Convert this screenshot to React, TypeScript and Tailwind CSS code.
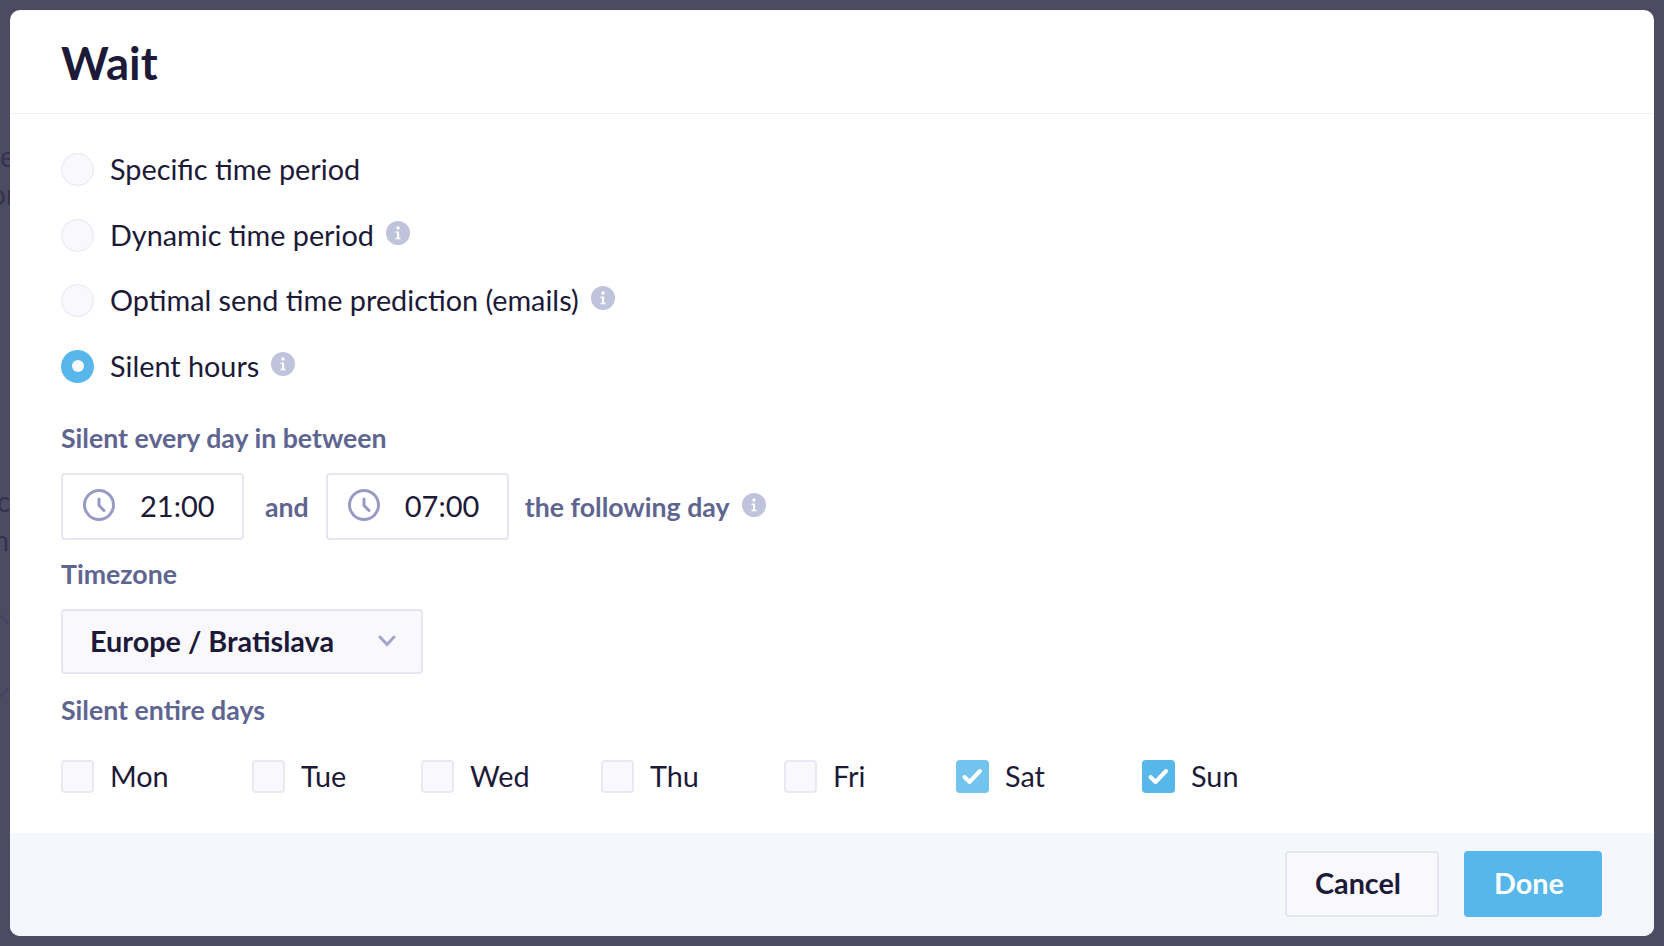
const TEXT = "text-[#1c1a38]";
const LABEL = "text-[26.7px] leading-[32px] font-bold text-[#5f6591]";

const DAYS = [
  { label: "Mon", width: "w-[191px]", box: "" },
  { label: "Tue", width: "w-[169px]", box: "" },
  { label: "Wed", width: "w-[180px]", box: "" },
  { label: "Thu", width: "w-[183px]", box: "" },
  { label: "Fri", width: "w-[172px]", box: "" },
  { label: "Sat", width: "w-[186px]", box: "bg-[#72c3ee]" },
  { label: "Sun", width: "", box: "bg-[#58b7ea]" },
];

function Info() {
  return (
    <svg width="24" height="24" viewBox="0 0 24 24" className="shrink-0">
      <circle cx="12" cy="12" r="12" fill="#c0c3dc" />
      <circle cx="12" cy="7" r="1.7" fill="#fff" />
      <path d="M9.5 10.5h3.6v6.2h1.4v1.6H9.5v-1.6h1.5v-4.6H9.5z" fill="#fff" />
    </svg>
  );
}

function Clock() {
  return (
    <svg width="32" height="32" viewBox="0 0 32 32" fill="none" className="shrink-0">
      <circle cx="16" cy="16" r="14.5" stroke="#979bc4" strokeWidth="3" />
      <path d="M16 10v6.5l5 5" stroke="#979bc4" strokeWidth="3" strokeLinecap="round" />
    </svg>
  );
}

function Radio({ label, on, info }: { label: string; on?: boolean; info?: boolean }) {
  return (
    <div className="flex items-center h-[33px]">
      {on ? (
        <span className="w-[33px] h-[33px] rounded-full bg-[#58b7ea] flex items-center justify-center shrink-0">
          <span className="w-[12px] h-[12px] rounded-full bg-[#f8f8fc]" />
        </span>
      ) : (
        <span className="w-[33px] h-[33px] rounded-full bg-[#f9f9fd] border border-[#e4e6f3] shrink-0" />
      )}
      <span className={`ml-[16px] text-[28.8px] leading-[33px] ${TEXT}`}>{label}</span>
      {info && (
        <span className="ml-[12px] -mt-[5px] flex">
          <Info />
        </span>
      )}
    </div>
  );
}

function TimeBox({ value }: { value: string }) {
  return (
    <div className="w-[183px] h-[67px] bg-white border-2 border-[#e4e6f3] rounded-[4px] flex items-center pl-[20px] shrink-0">
      <span className="flex -mt-[3px]">
        <Clock />
      </span>
      <span className={`ml-[25px] pb-[2px] text-[29px] ${TEXT}`}>{value}</span>
    </div>
  );
}

export default function App() {
  return (
    <div className="relative h-[946px] w-[1664px] overflow-hidden bg-[#4d4a63] p-[10px] font-['Lato',sans-serif]">
      {/* page showing behind the modal */}
      <span className="absolute left-[-10px] top-[135px] text-[28px] text-[#34324d]">te</span>
      <span className="absolute left-[-10px] top-[173px] text-[28px] text-[#34324d]">or</span>
      <span className="absolute left-[-10px] top-[480px] text-[28px] text-[#34324d]">ic</span>
      <span className="absolute left-[-14px] top-[519px] text-[28px] text-[#34324d]">m</span>
      <svg width="10" height="100" viewBox="0 0 10 100" fill="none" className="absolute left-0 top-[606px]">
        <path d="M0 9l10 10M0 91l10-10" stroke="#45435e" strokeWidth="2" />
      </svg>

      <div className="relative h-[926px] w-[1644px] rounded-[10px] bg-white overflow-hidden flex flex-col">
        <div className="h-[104px] border-b border-[#eeeff7] pl-[51px] pt-[25px] shrink-0">
          <h1 className={`text-[45.5px] leading-[56px] font-bold ${TEXT}`}>Wait</h1>
        </div>

        <div className="flex-1 pl-[51px] pt-[39px]">
          <div className="flex flex-col gap-[32.67px]">
            <Radio label="Specific time period" />
            <Radio label="Dynamic time period" info />
            <Radio label="Optimal send time prediction (emails)" info />
            <Radio label="Silent hours" on info />
          </div>

          <div className={`mt-[39px] ${LABEL}`}>Silent every day in between</div>

          <div className="mt-[19px] flex items-center">
            <TimeBox value="21:00" />
            <span className={`ml-[21px] mr-[17px] mt-[2px] ${LABEL}`}>and</span>
            <TimeBox value="07:00" />
            <span className={`ml-[16px] mt-[2px] ${LABEL}`}>the following day</span>
            <span className="ml-[12px] -mt-[3px] flex">
              <Info />
            </span>
          </div>

          <div className={`mt-[18px] ${LABEL}`}>Timezone</div>

          <div className="mt-[19px] w-[362px] h-[65px] bg-[#f9f9fd] border-2 border-[#e4e6f3] rounded-[4px] flex items-center justify-between pl-[27px] pr-[25px]">
            <span className={`text-[28.8px] font-bold ${TEXT}`}>Europe / Bratislava</span>
            <svg width="18" height="12" viewBox="0 0 18 12" fill="none" className="shrink-0">
              <path d="M2 2l7 7.5L16 2" stroke="#a3a6cb" strokeWidth="3" strokeLinecap="round" />
            </svg>
          </div>

          <div className={`mt-[20px] ${LABEL}`}>Silent entire days</div>

          <div className="mt-[34px] flex items-center">
            {DAYS.map((d) => (
              <div key={d.label} className={`flex items-center shrink-0 ${d.width}`}>
                {d.box ? (
                  <span className={`w-[33px] h-[33px] rounded-[4px] flex items-center justify-center ${d.box}`}>
                    <svg width="33" height="33" viewBox="0 0 33 33" fill="none">
                      <path d="M8.5 17l5 5 10.5-11" stroke="#fff" strokeWidth="4" strokeLinecap="round" strokeLinejoin="round" />
                    </svg>
                  </span>
                ) : (
                  <span className="w-[33px] h-[33px] rounded-[4px] bg-[#f9f9fd] border-2 border-[#e8e9f5]" />
                )}
                <span className={`ml-[16px] text-[28.8px] leading-[33px] ${TEXT}`}>{d.label}</span>
              </div>
            ))}
          </div>
        </div>

        <div className="h-[103px] shrink-0 bg-[#f6f7fc] flex justify-end gap-[25px] pt-[18px] pr-[52px]">
          <button className={`w-[154px] h-[66px] bg-[#f9f9fd] border-2 border-[#e4e6f3] rounded-[4px] pr-[8px] text-[28.8px] font-bold ${TEXT}`}>
            Cancel
          </button>
          <button className="w-[138px] h-[66px] bg-[#58b7ea] rounded-[4px] pr-[8px] text-[28.8px] font-bold text-white">
            Done
          </button>
        </div>
      </div>
    </div>
  );
}
